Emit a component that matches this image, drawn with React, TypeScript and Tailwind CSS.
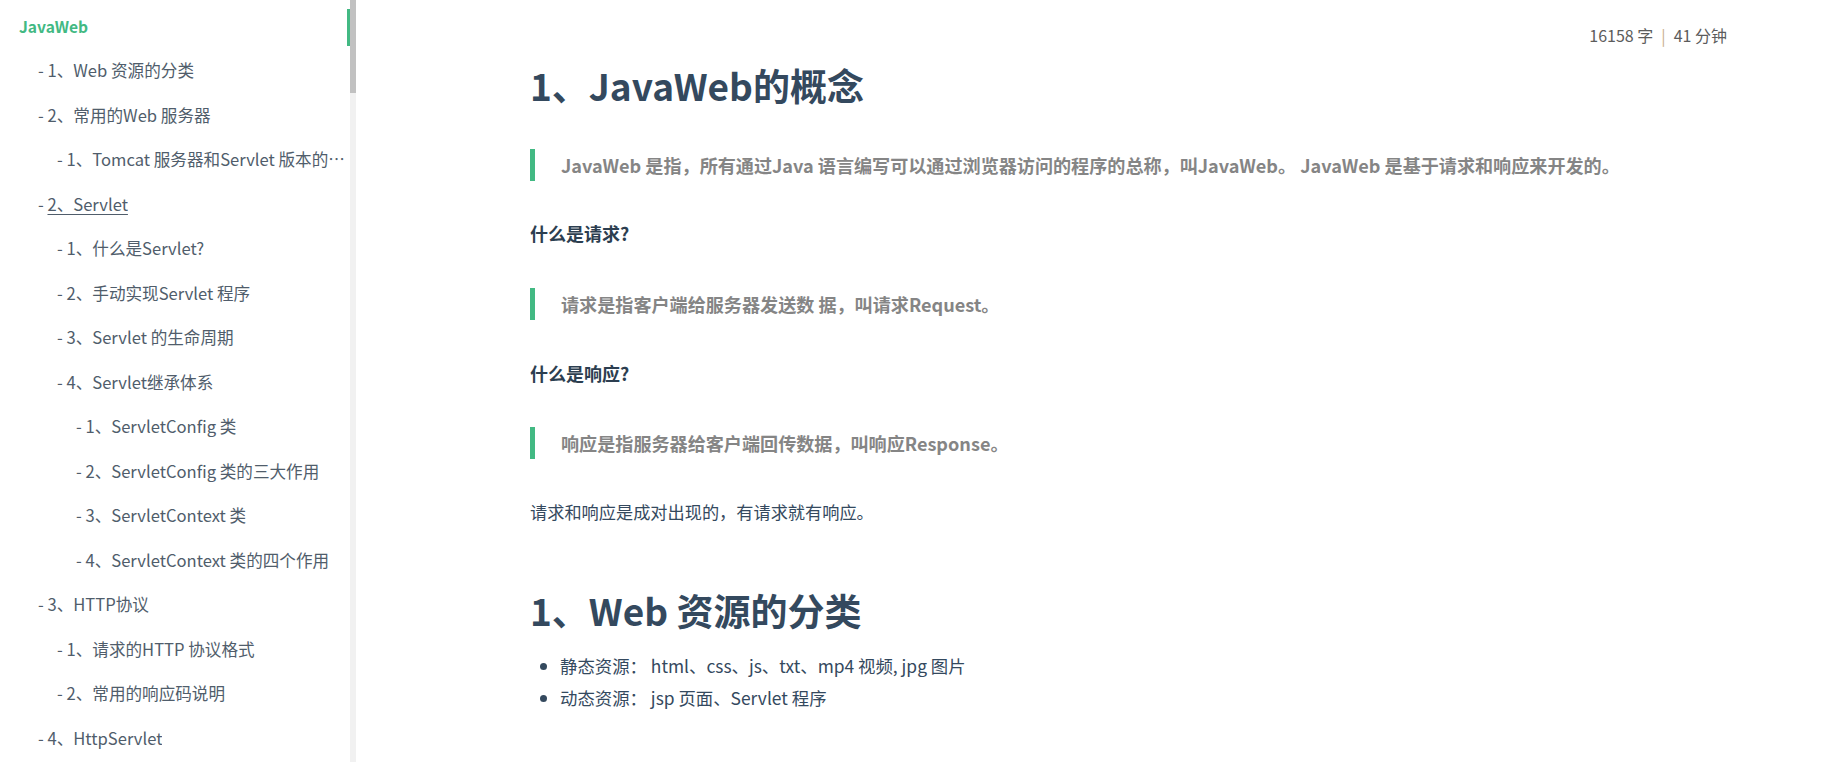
import React from "react";

type TocItem = { text: string; level: number; active?: boolean; underline?: boolean };

const toc: TocItem[] = [
  { text: "JavaWeb", level: 0, active: true },
  { text: "1、Web 资源的分类", level: 1 },
  { text: "2、常用的Web 服务器", level: 1 },
  { text: "1、Tomcat 服务器和Servlet 版本的对应关系", level: 2 },
  { text: "2、Servlet", level: 1, underline: true },
  { text: "1、什么是Servlet?", level: 2 },
  { text: "2、手动实现Servlet 程序", level: 2 },
  { text: "3、Servlet 的生命周期", level: 2 },
  { text: "4、Servlet继承体系", level: 2 },
  { text: "1、ServletConfig 类", level: 3 },
  { text: "2、ServletConfig 类的三大作用", level: 3 },
  { text: "3、ServletContext 类", level: 3 },
  { text: "4、ServletContext 类的四个作用", level: 3 },
  { text: "3、HTTP协议", level: 1 },
  { text: "1、请求的HTTP 协议格式", level: 2 },
  { text: "2、常用的响应码说明", level: 2 },
  { text: "4、HttpServlet", level: 1 },
  { text: "5、HttpServletRequest 类", level: 1 },
];

const indent: Record<number, string> = {
  0: "pl-[19px]",
  1: "pl-[38px]",
  2: "pl-[57px]",
  3: "pl-[76px]",
};

const Sidebar: React.FC = () => (
  <aside className="flex h-full shrink-0">
    <div className="relative w-[350px] h-full overflow-hidden pt-[4px]">
      {/* active marker */}
      <div className="absolute right-0 top-[9px] h-[37px] w-[3px] bg-[#42b983]" />
      <ul>
        {toc.map((item, i) => (
          <li
            key={i}
            className={`h-[44.5px] flex items-center pr-[3px] ${indent[item.level]}`}
          >
            {item.active ? (
              <span className="text-[15.6px] font-bold text-[#42b983]">{item.text}</span>
            ) : (
              <span className="text-[16.6px] text-[#505d6b] truncate">
                -{" "}
                <span className={item.underline ? "underline underline-offset-[3px]" : ""}>
                  {item.text}
                </span>
              </span>
            )}
          </li>
        ))}
      </ul>
    </div>
    {/* scrollbar */}
    <div className="w-[6px] h-full bg-[#f1f1f1]">
      <div className="h-[93px] bg-[#c1c1c1]" />
    </div>
  </aside>
);

const Quote: React.FC<{ children: React.ReactNode }> = ({ children }) => (
  <div className="border-l-[5px] border-[#42b983] pl-[26px] py-[2px]">
    <p className="text-[18.1px] leading-[28px] font-bold text-[#858585]">{children}</p>
  </div>
);

const Content: React.FC = () => (
  <main className="flex-1 h-full overflow-hidden">
    <div className="flex justify-end pr-[103px] pt-[25px]">
      <span className="text-[16px] leading-[20px] text-[#5c5c5c]">
        16158 字<span className="mx-[8px] text-[#c8b08a]">|</span>41 分钟
      </span>
    </div>
    <article className="pl-[174px] text-[#34495e]">
      <h1 className="mt-[16px] text-[37px] leading-[48px] font-bold text-[#34495e]">
        1、JavaWeb的概念
      </h1>
      <div className="mt-[40px]">
        <Quote>
          JavaWeb 是指，所有通过Java 语言编写可以通过浏览器访问的程序的总称，叫JavaWeb。 JavaWeb
          是基于请求和响应来开发的。
        </Quote>
      </div>
      <p className="mt-[38px] text-[18px] leading-[28px] font-bold text-[#2c3e50]">什么是请求?</p>
      <div className="mt-[41px]">
        <Quote>请求是指客户端给服务器发送数 据，叫请求Request。</Quote>
      </div>
      <p className="mt-[39px] text-[18px] leading-[28px] font-bold text-[#2c3e50]">什么是响应?</p>
      <div className="mt-[40px]">
        <Quote>响应是指服务器给客户端回传数据，叫响应Response。</Quote>
      </div>
      <p className="mt-[39px] text-[17.2px] leading-[28px]">请求和响应是成对出现的，有请求就有响应。</p>
      <h2 className="mt-[62px] text-[37px] leading-[44px] font-bold text-[#34495e]">
        1、Web 资源的分类
      </h2>
      <ul className="mt-[18px] list-disc pl-[30px] text-[17.4px] leading-[32px]">
        <li>静态资源： html、css、js、txt、mp4 视频, jpg 图片</li>
        <li>动态资源： jsp 页面、Servlet 程序</li>
      </ul>
    </article>
  </main>
);

export default function App() {
  return (
    <div
      className="flex w-[1830px] h-[762px] overflow-hidden bg-white"
      style={{ fontFamily: '"Noto Sans CJK SC", "Noto Sans", sans-serif' }}
    >
      <Sidebar />
      <Content />
    </div>
  );
}
